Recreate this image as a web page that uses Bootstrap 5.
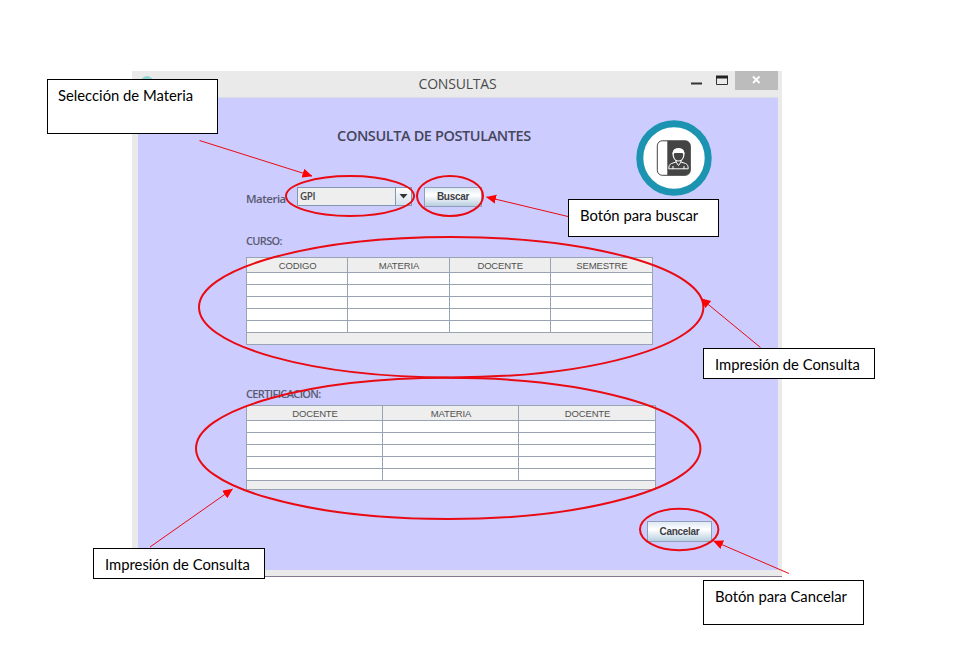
<!DOCTYPE html>
<html lang="es">
<head>
<meta charset="utf-8">
<meta name="viewport" content="width=device-width, initial-scale=1">
<title>Consultas</title>
<link href="https://cdn.jsdelivr.net/npm/bootstrap@5.3.0/dist/css/bootstrap.min.css" rel="stylesheet">
<style>
  body { background: #fff; width: 953px; height: 672px; overflow: hidden; font-family: "Liberation Sans", Arial, sans-serif; }
  .sheet { width: 953px; height: 672px; padding: 71px 0 0 132px; }
  .app-window { width: 650px; height: 506px; background: #eaeaea; border-bottom: 1px solid #85798f; padding: 0 4px 6px 6px; }
  .title-bar { height: 27px; border-bottom: 1px solid #dcdce4; }
  .app-dot { left: 3px; top: 5px; width: 12px; height: 12px; background: #8fd3d3; }
  .title-text { font: 14px/26px "Open Sans", sans-serif; color: #4a4a4a; letter-spacing: -.2px; padding-right: 1px; }
  .win-controls { height: 19px; right: 0; top: 0; }
  .win-controls svg { display: block; }
  .panel { height: 472px; background: #ccf; padding-left: 108px; }
  .top-area { height: 136px; }
  .top-main { width: 376px; padding-top: 28px; }
  .heading { font: 600 14.5px/20px "Open Sans", sans-serif; color: #45455a; letter-spacing: -.4px; margin: 0; white-space: nowrap; }
  .pick-row { margin-top: 41px; height: 20px; }
  .field-label { font: 600 11px/14px "Open Sans", sans-serif; color: #5a5a70; letter-spacing: -.65px; white-space: nowrap; }
  .pick-label { width: 51px; padding-top: 5px; font-size: 11.5px; letter-spacing: -.5px; }
  .combo { width: 115px; height: 19px; background: #eee; border: 1px solid #8497b0; font: 600 10px/17px "Open Sans", sans-serif; letter-spacing: -.4px; color: #444; }
  .combo-text { padding-left: 2px; }
  .combo-arrow { width: 16px; border-left: 1px solid #8497b0; background: linear-gradient(#fff, #d5e0ec); }
  .metal-btn { height: 20px; border: 1px solid #8f9fba; border-radius: 0; padding: 0; background: linear-gradient(#dfe9f3, #fff 40%, #b8cfe0); font: bold 10px/18px "Liberation Sans", sans-serif; color: #3e3e46; }
  .btn-find { width: 58px; margin-left: 12px; letter-spacing: -.3px; }
  .btn-cancel { width: 65px; height: 21px; margin-right: 66px; line-height: 19px; letter-spacing: -.3px; }
  .badge-icon { width: 76px; height: 76px; margin: 22px 0 0 14px; }
  .grid-box { background: #eee; border: 1px solid #98a4b4; }
  .grid-box table { width: 100%; table-layout: fixed; border-collapse: separate; border-spacing: 0; margin: 0; }
  .grid-box th { height: 15px; padding: 1px 0 0 1px; font: 9.5px/13px "Liberation Sans", sans-serif; letter-spacing: -.15px; color: #505050; text-align: center; background: #eee; border-bottom: 1px solid #98a4b4; border-right: 1px solid #98a4b4; }
  .grid-box td { height: 12px; padding: 0; background: #fff; border-bottom: 1px solid #98a4b4; border-right: 1px solid #98a4b4; }
  .grid-box th:last-child, .grid-box td:last-child { border-right: 0; }
  .grid-course { width: 407px; height: 88px; margin-top: 9px; }
  .grid-cert { width: 410px; height: 85px; margin-top: 4px; }
  .cert-block { margin-top: 42px; }
  .footer-row { margin-top: 31px; }
  .callout { border: 1px solid #000; background: #fff; color: #000; font: 14.8px/18px Lato, Carlito, sans-serif; padding: 6px 0 0 10px; white-space: nowrap; }
  .c-subject { left: 47px; top: 79px; width: 171px; height: 55px; }
  .c-find { left: 568px; top: 199px; width: 151px; height: 38px; padding-left: 11px; }
  .c-course { left: 703px; top: 348px; width: 172px; height: 31px; padding-left: 11px; }
  .c-cert { left: 93px; top: 548px; width: 172px; height: 31px; padding-left: 11px; }
  .c-cancel { left: 703px; top: 580px; width: 161px; height: 45px; padding-left: 11px; }
</style>
</head>
<body>
<main class="sheet position-relative">
  <section class="app-window">
    <header class="title-bar position-relative text-center">
      <span class="app-dot position-absolute rounded-circle"></span>
      <div class="title-text">CONSULTAS</div>
      <div class="win-controls position-absolute">
        <svg width="90" height="19" viewBox="0 0 90 19">
          <path d="M3 12.500h11" stroke="#333" stroke-width="2"/>
          <path d="M28.500 5v8.500h11V5" fill="none" stroke="#333"/>
          <path d="M28 6h12" stroke="#222" stroke-width="3"/>
          <path d="M47 0h43v19H47z" fill="#bcbcbc"/>
          <path d="M65 5.500l6.500 6.500M71.500 5.500L65 12" stroke="#fff" stroke-width="1.800"/>
        </svg>
      </div>
    </header>
    <div class="panel">
      <div class="top-area d-flex">
        <div class="top-main">
          <h1 class="heading text-center">CONSULTA DE POSTULANTES</h1>
          <div class="pick-row d-flex">
            <label class="field-label pick-label">Materia</label>
            <div class="combo d-flex justify-content-between">
              <span class="combo-text">GPI</span>
              <span class="combo-arrow d-flex align-items-center justify-content-center">
                <svg width="9" height="5" viewBox="0 0 9 5"><path d="M.5 0h8l-4 4.500z" fill="#333"/></svg>
              </span>
            </div>
            <button class="btn metal-btn btn-find" type="button">Buscar</button>
          </div>
        </div>
        <svg class="badge-icon" viewBox="0 0 76 76">
          <circle cx="38" cy="38" r="34.200" fill="#fff" stroke="#1b93b1" stroke-width="7"/>
          <rect x="21.300" y="20.800" width="33" height="34.500" rx="5" fill="#fff" stroke="#444"/>
          <path d="M31.300 20.800h18a5 5 0 0 1 5 5v24.500a5 5 0 0 1-5 5h-18z" fill="#444"/>
          <path d="M37.300 36c-1-5.500 1.500-7.300 5.200-7.300s6.200 1.800 5.200 7.300c-.6 3-2.700 5-5.200 5s-4.600-2-5.200-5z" fill="#444" stroke="#fff" stroke-width="1.200"/>
          <path d="M37 35c-1-4.500 1.500-6.500 5.500-6.500s6.500 2 5.500 6.500c-1-2.500-2.500-2-5.500-2s-4.500-.5-5.500 2z" fill="#fff"/>
          <path d="M40 40v2l-4.500 1.500c-2 .8-2.700 2.500-2.700 5.300h19.400c0-2.800-.7-4.500-2.700-5.300L45 42v-2M40 42l2.500 3.500 2.500-3.500M37 49v-3M48 49v-3" fill="none" stroke="#fff" stroke-width="1"/>
        </svg>
      </div>
      <div class="field-label">CURSO:</div>
      <div class="grid-box grid-course">
        <table>
          <thead><tr><th>CODIGO</th><th>MATERIA</th><th>DOCENTE</th><th>SEMESTRE</th></tr></thead>
          <tbody>
            <tr><td></td><td></td><td></td><td></td></tr>
            <tr><td></td><td></td><td></td><td></td></tr>
            <tr><td></td><td></td><td></td><td></td></tr>
            <tr><td></td><td></td><td></td><td></td></tr>
            <tr><td></td><td></td><td></td><td></td></tr>
          </tbody>
        </table>
      </div>
      <div class="cert-block">
        <div class="field-label">CERTIFICACION:</div>
        <div class="grid-box grid-cert">
          <table>
            <thead><tr><th>DOCENTE</th><th>MATERIA</th><th>DOCENTE</th></tr></thead>
            <tbody>
              <tr><td></td><td></td><td></td></tr>
              <tr><td></td><td></td><td></td></tr>
              <tr><td></td><td></td><td></td></tr>
              <tr><td></td><td></td><td></td></tr>
              <tr><td></td><td></td><td></td></tr>
            </tbody>
          </table>
        </div>
      </div>
      <div class="footer-row d-flex justify-content-end">
        <button class="btn metal-btn btn-cancel" type="button">Cancelar</button>
      </div>
    </div>
  </section>

  <svg class="position-absolute top-0 start-0 pe-none" width="953" height="672" viewBox="0 0 953 672">
    <defs>
      <marker id="tip" markerUnits="userSpaceOnUse" markerWidth="10" markerHeight="10" refX="9.500" refY="4.500" orient="auto">
        <path d="M0 0l10 4.500L0 9z" fill="#f00"/>
      </marker>
    </defs>
    <g fill="none" stroke="#e90a12" stroke-width="2">
      <ellipse cx="350" cy="196" rx="64" ry="20"/>
      <ellipse cx="450" cy="196" rx="33" ry="20"/>
      <ellipse cx="451.200" cy="307.200" rx="252.200" ry="70.200"/>
      <ellipse cx="448.200" cy="448.400" rx="252.200" ry="70.600"/>
      <ellipse cx="679.200" cy="529.500" rx="39.200" ry="20.700"/>
    </g>
    <g stroke="#e90a12" stroke-width="1">
      <path d="M199.500 140.500L312 176" marker-end="url(#tip)"/>
      <path d="M568 216.500L486.500 197" marker-end="url(#tip)"/>
      <path d="M760.500 347.500L701 298.500" marker-end="url(#tip)"/>
      <path d="M150 547L232.500 489" marker-end="url(#tip)"/>
      <path d="M789 573.500L713.500 541" marker-end="url(#tip)"/>
    </g>
  </svg>

  <div class="callout c-subject position-absolute">Selección de Materia</div>
  <div class="callout c-find position-absolute">Botón para buscar</div>
  <div class="callout c-course position-absolute">Impresión de Consulta</div>
  <div class="callout c-cert position-absolute">Impresión de Consulta</div>
  <div class="callout c-cancel position-absolute">Botón para Cancelar</div>
</main>
<script src="https://cdn.jsdelivr.net/npm/bootstrap@5.3.0/dist/js/bootstrap.bundle.min.js"></script>
</body>
</html>
